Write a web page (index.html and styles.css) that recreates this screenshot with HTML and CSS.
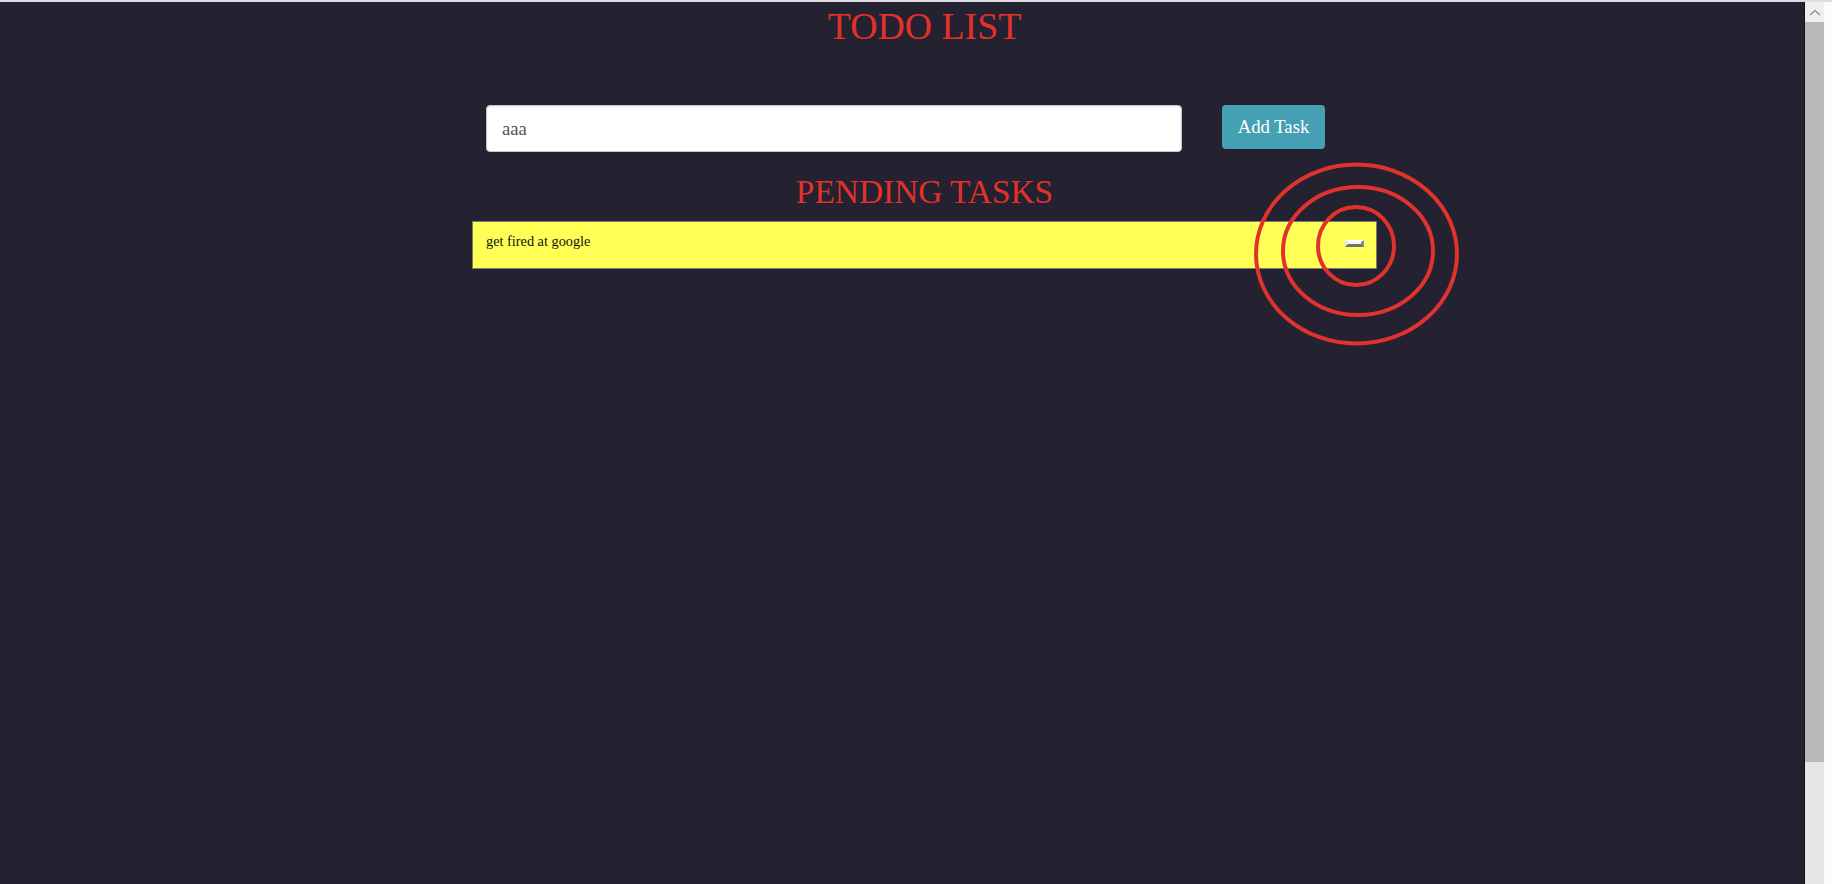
FILE: index.html
```html
<!DOCTYPE html>
<html lang="en">
<head>
<meta charset="utf-8">
<title>TODO LIST</title>
<link rel="stylesheet" href="styles.css">
</head>
<body>
<div class="window">
  <div class="topline"></div>
  <div class="frame">
    <main class="page">
      <div class="container">
        <h1 class="title">TODO LIST</h1>
        <form class="add-form">
          <input class="task-input" type="text" value="aaa">
          <button class="add-btn" type="button">Add Task</button>
        </form>
        <h2 class="subtitle">PENDING TASKS</h2>
        <ul class="task-list">
          <li class="task">
            <span class="task-text">get fired at google</span>
            <button class="del-btn" type="button" aria-label="delete"></button>
          </li>
        </ul>
      </div>
    </main>
    <div class="scrollbar">
      <div class="sb-track">
        <div class="sb-up">
          <svg width="12" height="7" viewBox="0 0 12 7"><path d="M1 6 L6 1.5 L11 6" fill="none" stroke="#8a8a8a" stroke-width="1.2"/></svg>
        </div>
        <div class="sb-thumb"></div>
        <div class="sb-rest"></div>
      </div>
      <div class="sb-edge"></div>
    </div>
  </div>
  <svg class="marks" width="1832" height="884" viewBox="0 0 1832 884">
    <ellipse cx="1356" cy="246" rx="38" ry="39" fill="none" stroke="#e0332e" stroke-width="4"/>
    <ellipse cx="1358" cy="251" rx="75" ry="64" fill="none" stroke="#e0332e" stroke-width="4"/>
    <ellipse cx="1356.5" cy="254" rx="100.5" ry="89.5" fill="none" stroke="#e0332e" stroke-width="4"/>
  </svg>
</div>
</body>
</html>
```

FILE: styles.css
```css
html, body {
  margin: 0;
  padding: 0;
  height: 100%;
  overflow: hidden;
}

body {
  font-family: "Liberation Serif", "Times New Roman", serif;
  background: #242130;
}

.window {
  position: relative;
  height: 100vh;
  display: flex;
  flex-direction: column;
}

.topline {
  height: 2px;
  background: #dcdce0;
  flex: none;
}

.frame {
  flex: 1;
  display: flex;
  min-height: 0;
}

.page {
  flex: 1;
  background: #242130;
  padding-left: 45px;
  border-right: 1px solid #141219;
}

.container {
  width: 905px;
  margin: 0 auto;
}

.title {
  margin: 4.5px 0 0;
  font-weight: normal;
  font-size: 37.8px;
  line-height: 38px;
  color: #e3312a;
  text-align: center;
}

.add-form {
  margin: 60.5px 0 0;
  padding-left: 14px;
  display: flex;
  align-items: flex-start;
  gap: 40px;
}

.task-input {
  width: 696px;
  height: 47px;
  box-sizing: border-box;
  border: 1px solid #c5c5cc;
  border-radius: 4px;
  background: #fff;
  padding: 0 15px;
  font-family: "Liberation Serif", "Times New Roman", serif;
  font-size: 18.7px;
  color: #555;
  outline: none;
  box-shadow: inset 0 1px 2px rgba(0,0,0,0.08);
}

.add-btn {
  width: 103px;
  height: 44px;
  border: none;
  border-radius: 4px;
  background: #46a0b3;
  color: #fff;
  font-family: "Liberation Serif", "Times New Roman", serif;
  font-size: 18.7px;
  padding: 0;
}

.subtitle {
  margin: 24px 0 0;
  font-weight: normal;
  font-size: 33.4px;
  line-height: 31px;
  color: #e3312a;
  text-align: center;
}

.task-list {
  list-style: none;
  margin: 14px 0 0;
  padding: 0;
}

.task {
  height: 48px;
  box-sizing: border-box;
  border: 1px solid #7a7a70;
  background: #ffff55;
  display: flex;
  align-items: center;
  justify-content: space-between;
  padding: 0 12px 8px 13px;
}

.task-text {
  font-size: 14.3px;
  line-height: 17px;
  color: #111;
}

.del-btn {
  width: 19px;
  height: 7px;
  box-sizing: border-box;
  padding: 0;
  margin-top: 5px;
  background: #f4f4f4;
  border-style: solid;
  border-width: 2px 3px 3px 3px;
  border-color: #ffffff #8c8c8c #6f6f6f #e6e6e6;
}

.scrollbar {
  width: 27px;
  flex: none;
  display: flex;
}

.sb-track {
  width: 19px;
  display: flex;
  flex-direction: column;
  background: #e6e6e6;
}

.sb-up {
  height: 20px;
  background: #efefef;
  display: flex;
  align-items: center;
  justify-content: center;
}

.sb-thumb {
  height: 740px;
  background: #b8b8b8;
}

.sb-rest {
  flex: 1;
  background: #e6e6e6;
}

.sb-edge {
  flex: 1;
  background: #fbfbfb;
}

.marks {
  position: absolute;
  left: 0;
  top: 0;
  pointer-events: none;
}
```
